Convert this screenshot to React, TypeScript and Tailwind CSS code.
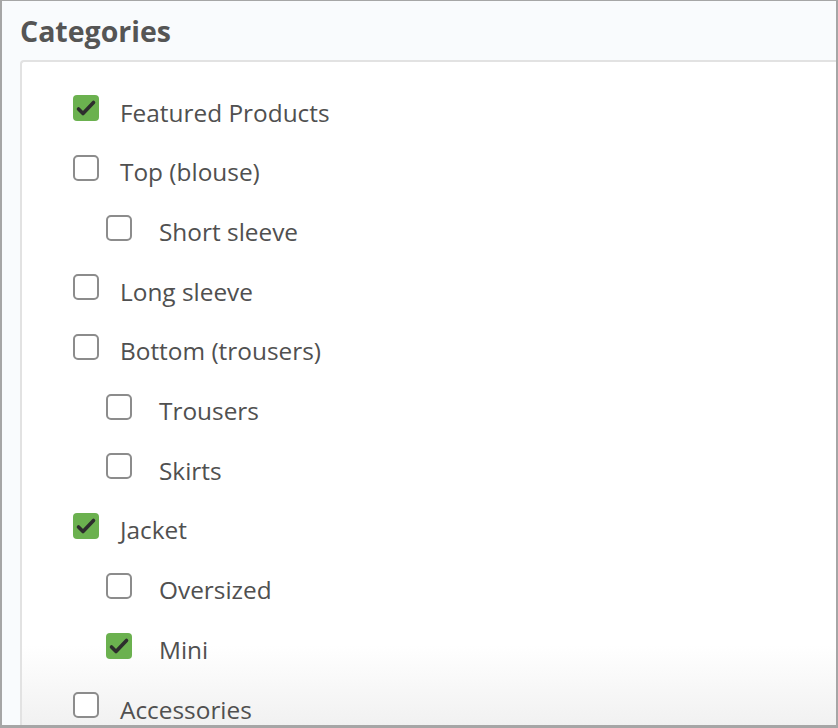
import React from 'react';

interface Category {
  label: string;
  level: number;
  checked: boolean;
}

const categories: Category[] = [
  { label: 'Featured Products', level: 0, checked: true },
  { label: 'Top (blouse)', level: 0, checked: false },
  { label: 'Short sleeve', level: 1, checked: false },
  { label: 'Long sleeve', level: 0, checked: false },
  { label: 'Bottom (trousers)', level: 0, checked: false },
  { label: 'Trousers', level: 1, checked: false },
  { label: 'Skirts', level: 1, checked: false },
  { label: 'Jacket', level: 0, checked: true },
  { label: 'Oversized', level: 1, checked: false },
  { label: 'Mini', level: 1, checked: true },
  { label: 'Accessories', level: 0, checked: false },
];

const CheckBox: React.FC<{ checked: boolean }> = ({ checked }) =>
  checked ? (
    <span className="flex h-[26px] w-[26px] shrink-0 items-center justify-center rounded-[4px] bg-[#6bb14f]">
      <svg width="26" height="26" viewBox="0 0 26 26" fill="none">
        <path d="M5.5 14 L10 18.5 L20.5 7.5" stroke="#2d2d2d" strokeWidth="3.6" strokeLinecap="round" strokeLinejoin="round" />
      </svg>
    </span>
  ) : (
    <span className="block h-[26px] w-[26px] shrink-0 rounded-[5px] border-2 border-[#8c8c8c] bg-white" />
  );

export default function App() {
  return (
    <div
      className="flex h-[728px] w-[838px] flex-col overflow-hidden border-t border-r-2 border-b-[3px] border-l-2 border-[#a6a6a6] bg-[#f9fbfd] text-[#555]"
      style={{ fontFamily: '"Open Sans", "Liberation Sans", sans-serif' }}
    >
      <h2 className="h-[59px] shrink-0 pl-[18px] pt-[11px] text-[28.5px] font-bold leading-[38px] text-[#555]">
        Categories
      </h2>
      <div className="ml-[18px] min-h-0 flex-1 rounded-tl-[4px] border-l-2 border-t-2 border-[#e2e2e2] bg-[linear-gradient(to_bottom,#ffffff_0%,#ffffff_88%,#f1f1f1_100%)] pl-[51px] pt-[21px]">
        {categories.map(cat => (
          <div
            key={cat.label}
            className={`flex h-[59.7px] items-center ${cat.level === 1 ? 'pl-[33px] gap-[27px]' : 'gap-[21px]'}`}
          >
            <span className="-mt-[9px]">
              <CheckBox checked={cat.checked} />
            </span>
            <span className="text-[24.4px] leading-none text-[#505050]">{cat.label}</span>
          </div>
        ))}
      </div>
    </div>
  );
}
